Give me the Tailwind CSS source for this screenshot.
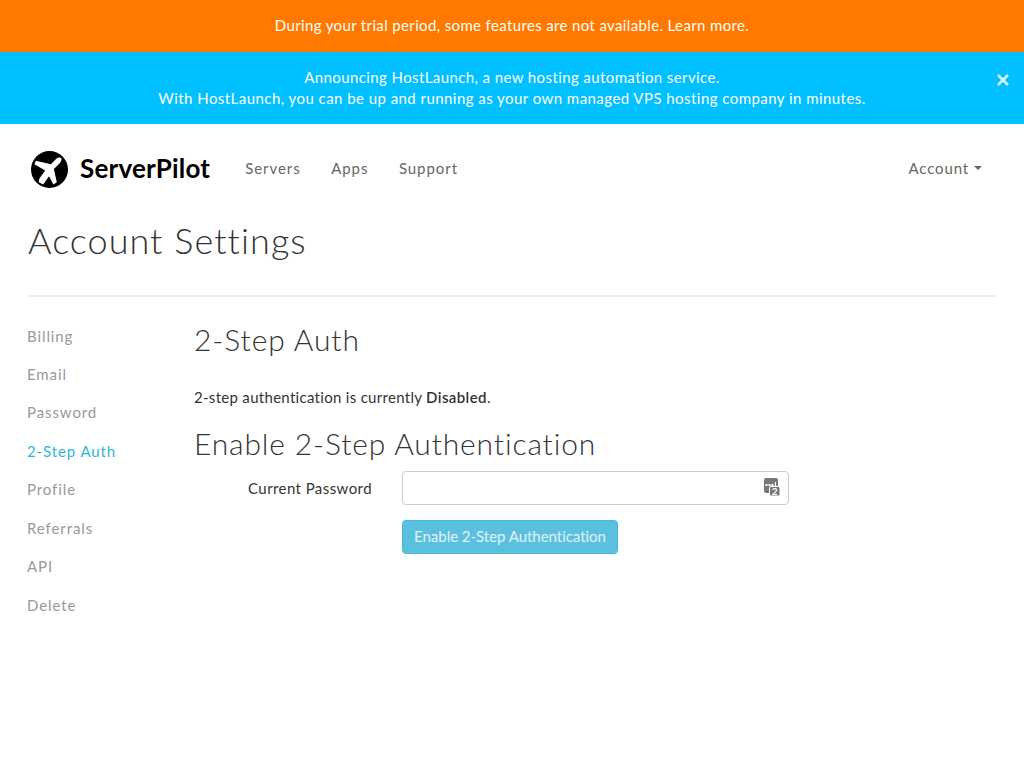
<!DOCTYPE html>
<html lang="en">
<head>
  <meta charset="UTF-8" />
  <title>Account Settings - ServerPilot</title>
  <script src="https://cdn.jsdelivr.net/npm/@tailwindcss/browser@4"></script>
</head>
<body class="bg-white font-['Lato',sans-serif] text-[15px] text-[#333] tracking-[0.3px]">

  <!-- Banners -->
  <div class="h-[52px] pb-[2px] bg-[#ff7800] text-white tracking-[0.36px] flex items-center justify-center">During your trial period, some features are not available. Learn more.</div>
  <div class="relative h-[72px] bg-[#00c0ff] text-white tracking-[0.45px] flex flex-col items-center justify-center leading-[21px]">
    <p class="tracking-[0.4px]">Announcing HostLaunch, a new hosting automation service.</p>
    <p>With HostLaunch, you can be up and running as your own managed VPS hosting company in minutes.</p>
    <svg class="absolute right-[15px] top-[22px]" width="12" height="12" viewBox="0 0 12 12" fill="none" stroke="#d4f4ff" stroke-width="2.6"><path d="M1 1l10 10M11 1L1 11"/></svg>
  </div>

  <!-- Nav -->
  <nav class="h-[90px] pb-[2px] pl-[31px] pr-[42px] flex items-center text-[#666] tracking-[0.95px]">
    <svg class="mr-[12px] mt-[2px]" width="37" height="37" viewBox="0 0 38 38">
      <circle cx="19" cy="19" r="19" fill="#000"/>
      <path fill="#fff" d="M31.500 7.500c-1.500-1.500-4-1-5.500.5l-5.500 5.500L5 10 3.500 13.500 14.500 20 8.500 28.500 8 32l4.500 2.500 6-8.500 4.500 8.500 3.500-2.500-3-13.500 5.500-5.500c1.500-1.500 3-3.500 2-5.500z"/>
    </svg>
    <span class="font-bold text-[26px] text-black tracking-[0.2px] mr-[35px]">ServerPilot</span>
    <a class="mr-[30.500px]">Servers</a>
    <a class="mr-[30.500px]">Apps</a>
    <a>Support</a>
    <a class="ml-auto flex items-center tracking-[0.85px]">Account<span class="ml-[5px] border-x-[4px] border-x-transparent border-t-[4px] border-t-[#666]"></span></a>
  </nav>

  <!-- Page title -->
  <div class="mx-[27px] h-[83px] border-b-2 border-[#eee]">
    <h1 class="ml-[1px] text-[36px] leading-[52px] text-[#333] font-light tracking-[1.05px]">Account Settings</h1>
  </div>

  <div class="flex mx-[27px] mt-[20px]">
    <!-- Side menu -->
    <ul class="w-[167px] -mt-[0.45px] text-[#999] leading-[38.45px] tracking-[0.9px]">
      <li>Billing</li>
      <li>Email</li>
      <li>Password</li>
      <li class="text-[#2fb5d8]">2-Step Auth</li>
      <li>Profile</li>
      <li>Referrals</li>
      <li>API</li>
      <li>Delete</li>
    </ul>

    <!-- Content -->
    <div class="flex-1">
      <h2 class="text-[30px] leading-[44px] font-light tracking-[0.9px]">2-Step Auth</h2>
      <p class="mt-[25px] leading-[22px] tracking-[0.3px]">2-step authentication is currently <b class="font-semibold tracking-[0.4px]">Disabled</b>.</p>
      <h2 class="mt-[13px] text-[30px] leading-[44px] font-light tracking-[0.85px]">Enable 2-Step Authentication</h2>
      <div class="mt-[6px] flex items-center">
        <label class="w-[178px] text-right tracking-[0.42px]">Current Password</label>
        <div class="relative ml-[30px] w-[387px] h-[34px] border border-[#ccc] rounded-[4px]">
          <svg class="absolute right-[8px] top-[6px]" width="16" height="18" viewBox="0 0 16 18">
            <rect x="0" y="0" width="14" height="15" rx="2" fill="#777"/>
            <path d="M1.500 6h2v2h-2zM4.500 6h2v2h-2zM7.500 6h2v2h-2z" fill="#fff"/>
            <rect x="11" y="4" width="1" height="4" fill="#fff"/>
            <rect x="5.500" y="8.500" width="10.500" height="9.500" rx="1.500" fill="#777" stroke="#fff"/>
            <text x="10.800" y="17" font-size="10" font-weight="700" text-anchor="middle" fill="#fff">2</text>
          </svg>
        </div>
      </div>
      <button class="block mt-[15px] ml-[208px] h-[34px] pb-[2px] w-[216px] bg-[#5bc0de] border border-[#46b8da] rounded-[4px] text-white/80 tracking-[-0.03px] text-center">Enable 2-Step Authentication</button>
    </div>
  </div>
</body>
</html>
